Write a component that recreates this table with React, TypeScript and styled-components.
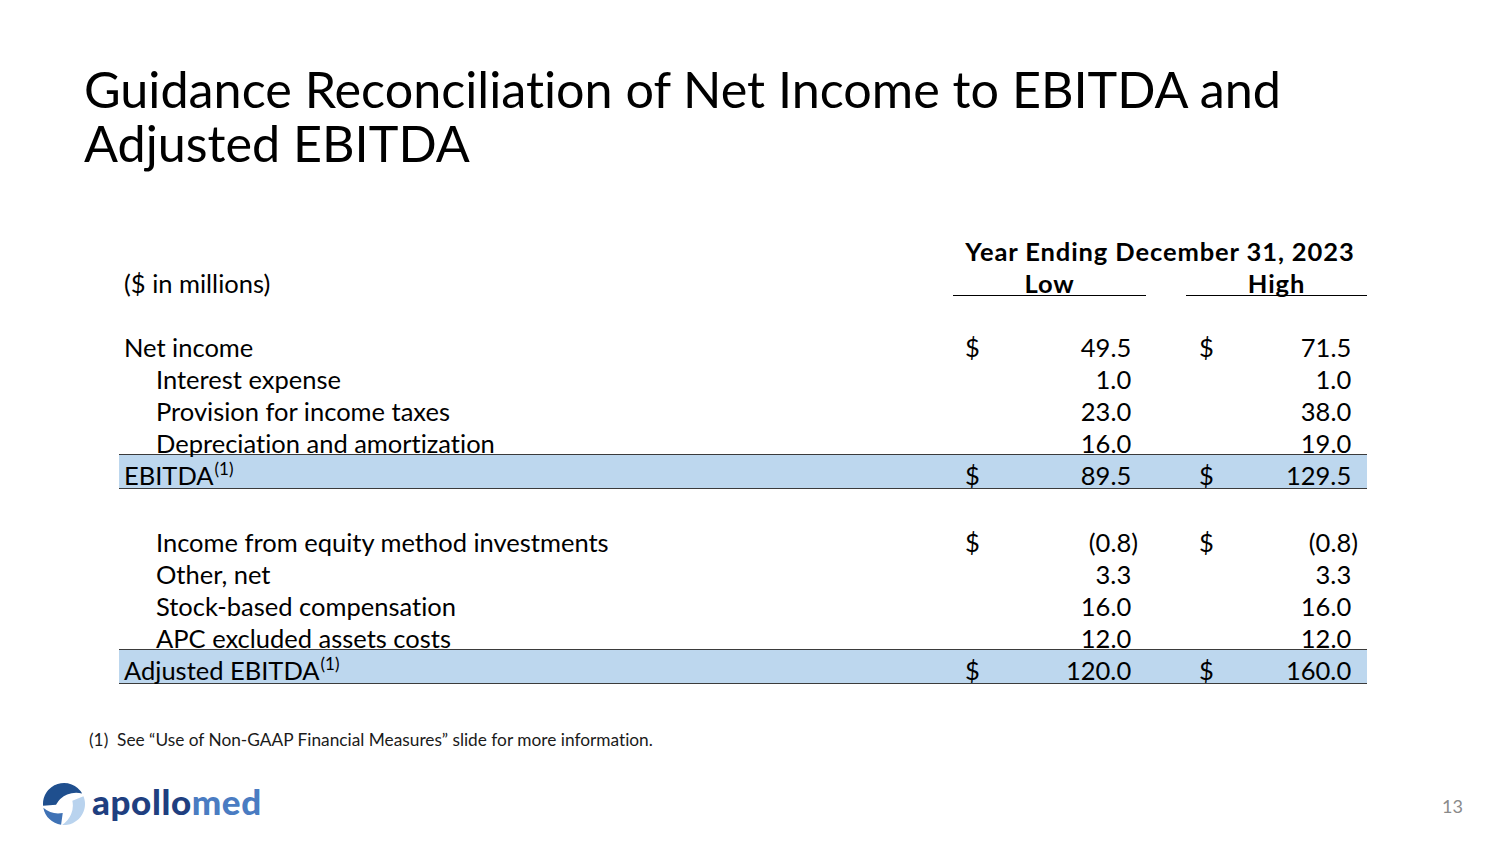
import React from "react";
import styled, { createGlobalStyle } from "styled-components";

const GlobalStyle = createGlobalStyle`
  html, body {
    margin: 0;
    padding: 0;
    background: #ffffff;
  }
  body {
    font-family: Lato, "Noto Sans", "Liberation Sans", sans-serif;
    font-variant-ligatures: none;
    color: #000;
  }
`;

const Slide = styled.div`
  width: 1500px;
  height: 844px;
  box-sizing: border-box;
  display: flex;
  flex-direction: column;
  overflow: hidden;
  background: #fff;
`;

const Title = styled.h1`
  margin: 0;
  padding: 62px 0 0 84px;
  font-weight: 400;
  font-size: 50.3px;
  line-height: 54px;
  color: #000;
`;

const Table = styled.div`
  margin: 65px 0 0 119px;
  width: 1248px;
  font-size: 25.5px;
`;

const Row = styled.div<{ $h: number; $band?: boolean }>`
  display: grid;
  grid-template-columns: 834px 193px 40px 181px;
  height: ${(p) => p.$h}px;
  box-sizing: border-box;
  line-height: 32px;
  white-space: nowrap;
  ${(p) =>
    p.$band &&
    `
    background: #bdd7ee;
    border-top: 1px solid #3b3b3b;
    border-bottom: 1px solid #3b3b3b;
    padding-top: 4px;
  `}
`;

const Label = styled.div<{ $indent?: boolean }>`
  padding-left: ${(p) => (p.$indent ? 37 : 5)}px;
`;

const Heading = styled.div`
  grid-column: 2 / 5;
  text-align: center;
  font-weight: 700;
  letter-spacing: 0.9px;
`;

const ColHead = styled.div<{ $col: number }>`
  grid-column: ${(p) => p.$col};
  text-align: center;
  font-weight: 700;
  letter-spacing: 0.9px;
  border-bottom: 1px solid #000;
  height: 28px;
`;

const Amount = styled.div<{ $col: number; $left: number; $right: number }>`
  grid-column: ${(p) => p.$col};
  display: flex;
  justify-content: space-between;
  padding-left: ${(p) => p.$left}px;
  padding-right: ${(p) => p.$right}px;
`;

const Paren = styled.span<{ $hidden?: boolean }>`
  visibility: ${(p) => (p.$hidden ? "hidden" : "visible")};
`;

const Note = styled.sup`
  font-size: 17px;
  line-height: 0;
  vertical-align: 10px;
  margin-left: 1px;
`;

const Spacer = styled.div<{ $h: number }>`
  height: ${(p) => p.$h}px;
`;

const Footnote = styled.div`
  margin: 46px 0 0 89px;
  font-size: 17.3px;
  line-height: 20px;
  color: #1a1a1a;
  white-space: pre;
`;

const Footer = styled.div`
  margin-top: auto;
  padding: 0 37px 18px 42px;
  height: 44px;
  display: flex;
  align-items: center;
  justify-content: space-between;
`;

const Logo = styled.div`
  display: flex;
  align-items: center;
  gap: 6px;
`;

const Wordmark = styled.span`
  font-family: Lato, "Noto Sans", sans-serif;
  font-weight: 900;
  font-size: 35px;
  letter-spacing: 0.6px;
  color: #1f3f80;
  line-height: 1;
  margin-top: -6px;
`;

const Med = styled.span`
  color: #4a7cc2;
`;

const PageNum = styled.span`
  font-size: 18px;
  color: #8a8a8a;
  margin-top: 4px;
`;

const pt = (a: number, r: number) => {
  const rad = (a * Math.PI) / 180;
  return `${(22 + r * Math.cos(rad)).toFixed(2)} ${(22 + r * Math.sin(rad)).toFixed(2)}`;
};

// crescent blade: thick at its start angle, tapering to a point at its end
const blade = (a1: number, a2: number, t: number) =>
  `M${pt(a1, 21)} A21 21 0 0 1 ${pt(a2, 21)} A23 23 0 0 0 ${pt(a1, 21 - t)} Z`;

const LogoMark = () => (
  <svg width="44" height="44" viewBox="0 0 44 44">
    <path d={blade(175, 330, 13)} fill="#1f4f8e" />
    <path d={blade(338, 455, 12)} fill="#b9d3ee" />
    <path d={blade(98, 170, 12)} fill="#3f72b5" />
  </svg>
);

type Line = {
  label: string;
  indent?: boolean;
  dollar?: boolean;
  low: string;
  high: string;
  h: number;
};

const Value = ({ v, dollar, col, left, right }: { v: string; dollar?: boolean; col: number; left: number; right: number }) => {
  const neg = v.startsWith("(");
  return (
    <Amount $col={col} $left={left} $right={right}>
      <span>{dollar ? "$" : ""}</span>
      <span>
        {v}
        {!neg && <Paren $hidden>)</Paren>}
      </span>
    </Amount>
  );
};

const Item = ({ l }: { l: Line }) => (
  <Row $h={l.h}>
    <Label $indent={l.indent}>{l.label}</Label>
    <Value v={l.low} dollar={l.dollar} col={2} left={12} right={8} />
    <Value v={l.high} dollar={l.dollar} col={4} left={13} right={9} />
  </Row>
);

const Total = ({ label, low, high }: { label: string; low: string; high: string }) => (
  <Row $h={35} $band>
    <Label>
      {label}
      <Note>(1)</Note>
    </Label>
    <Value v={low} dollar col={2} left={12} right={8} />
    <Value v={high} dollar col={4} left={13} right={9} />
  </Row>
);

const first: Line[] = [
  { label: "Net income", dollar: true, low: "49.5", high: "71.5", h: 32 },
  { label: "Interest expense", indent: true, low: "1.0", high: "1.0", h: 32 },
  { label: "Provision for income taxes", indent: true, low: "23.0", high: "38.0", h: 32 },
  { label: "Depreciation and amortization", indent: true, low: "16.0", high: "19.0", h: 27 },
];

const second: Line[] = [
  { label: "Income from equity method investments", indent: true, dollar: true, low: "(0.8)", high: "(0.8)", h: 32 },
  { label: "Other, net", indent: true, low: "3.3", high: "3.3", h: 32 },
  { label: "Stock-based compensation", indent: true, low: "16.0", high: "16.0", h: 32 },
  { label: "APC excluded assets costs", indent: true, low: "12.0", high: "12.0", h: 27 },
];

export default function App() {
  return (
    <>
      <GlobalStyle />
      <Slide>
        <Title>
          Guidance Reconciliation of Net Income to EBITDA and
          <br />
          Adjusted EBITDA
        </Title>

        <Table>
          <Row $h={32}>
            <Label />
            <Heading>Year Ending December 31, 2023</Heading>
          </Row>
          <Row $h={29}>
            <Label>($ in millions)</Label>
            <ColHead $col={2}>Low</ColHead>
            <ColHead $col={4}>High</ColHead>
          </Row>
          <Spacer $h={35} />
          {first.map((l) => (
            <Item key={l.label} l={l} />
          ))}
          <Total label="EBITDA" low="89.5" high="129.5" />
          <Spacer $h={37} />
          {second.map((l) => (
            <Item key={l.label} l={l} />
          ))}
          <Total label="Adjusted EBITDA" low="120.0" high="160.0" />
        </Table>

        <Footnote>(1)  See “Use of Non-GAAP Financial Measures” slide for more information.</Footnote>

        <Footer>
          <Logo>
            <LogoMark />
            <Wordmark>
              apollo<Med>med</Med>
            </Wordmark>
          </Logo>
          <PageNum>13</PageNum>
        </Footer>
      </Slide>
    </>
  );
}
